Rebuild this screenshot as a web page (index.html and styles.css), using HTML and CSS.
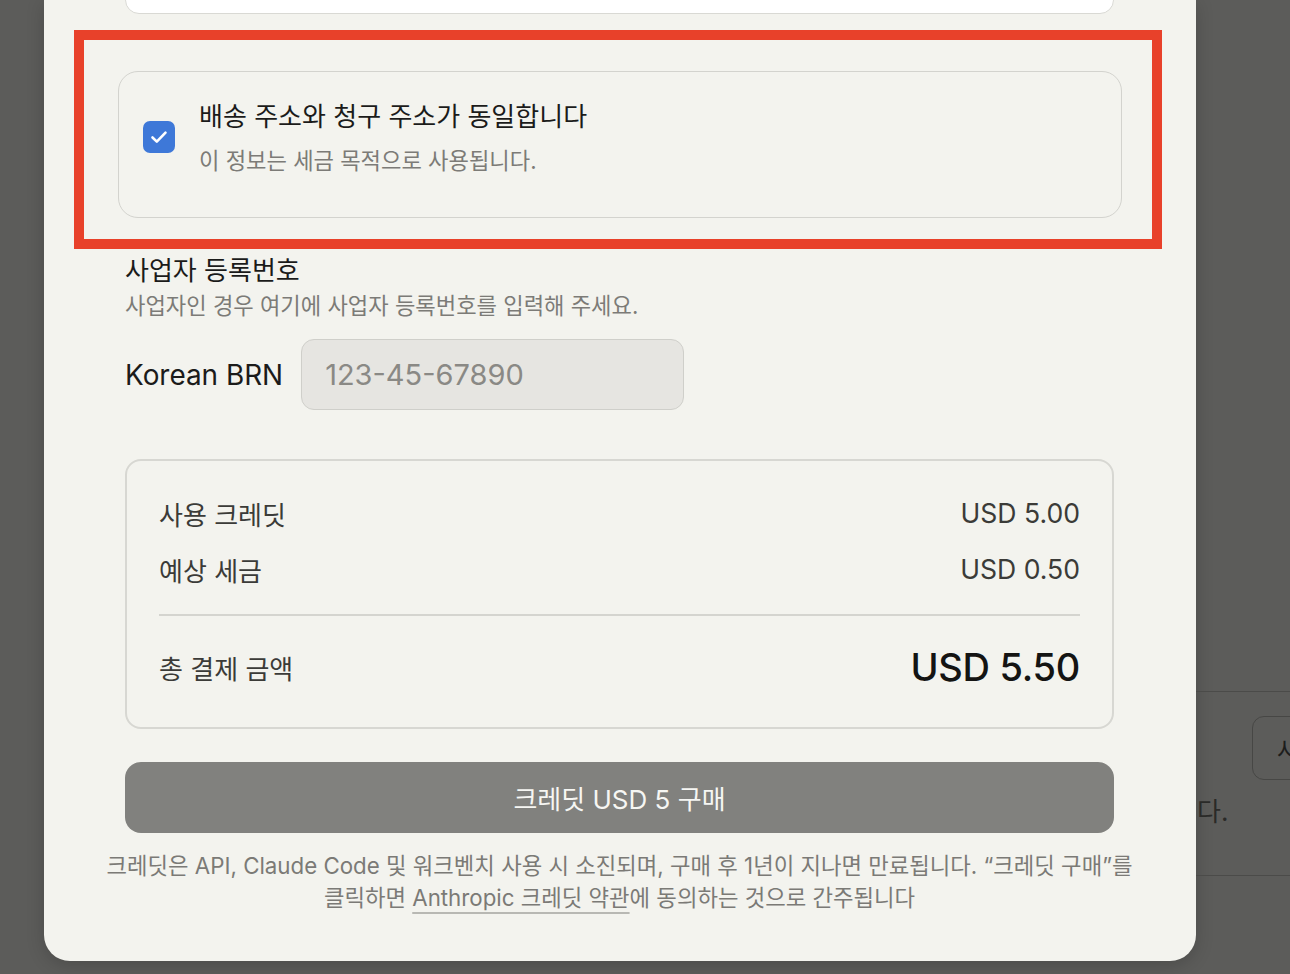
FILE: index.html
```html
<!DOCTYPE html>
<html lang="ko">
<head>
<meta charset="utf-8">
<title>크레딧 구매</title>
<link rel="stylesheet" href="styles.css">
</head>
<body>
<div class="page">
  <div class="modal">
    <div class="prev-input"></div>

    <div class="highlight">
      <label class="check-card">
        <span class="checkbox">
          <svg viewBox="0 0 32 32" width="32" height="32" aria-hidden="true">
            <path d="M9.5 16.5 L13.8 20.6 L22.5 11.6" fill="none" stroke="#ffffff" stroke-width="2.6" stroke-linecap="round" stroke-linejoin="round"/>
          </svg>
        </span>
        <span class="check-text">
          <span class="check-title">배송 주소와 청구 주소가 동일합니다</span>
          <span class="check-sub">이 정보는 세금 목적으로 사용됩니다.</span>
        </span>
      </label>
    </div>

    <div class="brn-section">
      <div class="section-title">사업자 등록번호</div>
      <div class="section-sub">사업자인 경우 여기에 사업자 등록번호를 입력해 주세요.</div>
      <div class="brn-row">
        <span class="brn-label">Korean BRN</span>
        <div class="brn-input">123-45-67890</div>
      </div>
    </div>

    <div class="summary">
      <div class="sum-row">
        <span class="sum-label">사용 크레딧</span>
        <span class="sum-value">USD 5.00</span>
      </div>
      <div class="sum-row second">
        <span class="sum-label">예상 세금</span>
        <span class="sum-value">USD 0.50</span>
      </div>
      <div class="sum-divider"></div>
      <div class="sum-row total">
        <span class="sum-label">총 결제 금액</span>
        <span class="sum-total">USD 5.50</span>
      </div>
    </div>

    <button class="buy-btn" type="button">크레딧 USD 5 구매</button>

    <p class="footnote">크레딧은 API, Claude Code 및 워크벤치 사용 시 소진되며, 구매 후 1년이 지나면 만료됩니다. “크레딧 구매”를<br>클릭하면 <span class="terms">Anthropic 크레딧 약관</span>에 동의하는 것으로 간주됩니다</p>
  </div>

  <div class="behind">
    <div class="behind-section">
      <div class="behind-btn">사용</div>
      <div class="behind-text">다.</div>
    </div>
  </div>
</div>
</body>
</html>
```

FILE: styles.css
```css
* {
  box-sizing: border-box;
}

html, body {
  margin: 0;
  padding: 0;
}

body {
  background: #5c5c5a;
  font-family: "Inter", "Noto Sans CJK KR", sans-serif;
  overflow: hidden;
  width: 1290px;
  height: 974px;
}

.page {
  display: flex;
  height: 974px;
  overflow: hidden;
}

.modal {
  flex: none;
  width: 1152px;
  margin-left: 44px;
  height: 961px;
  background: #f3f3ee;
  border-radius: 0 0 26px 26px;
  box-shadow: 0 4px 18px rgba(0, 0, 0, 0.18);
  display: flex;
  flex-direction: column;
  padding: 0 82px 0 81px;
}

.prev-input {
  flex: none;
  height: 56px;
  margin-top: -42px;
  background: #ffffff;
  border: 1.5px solid #d9d9d4;
  border-radius: 14px;
}

.highlight {
  margin: 16px -48px 0 -51px;
  border: 10px solid #e8412a;
  padding: 31px 30px 21px 34px;
}

.check-card {
  display: flex;
  align-items: flex-start;
  gap: 24px;
  height: 147px;
  border: 1.5px solid #d3d3ce;
  border-radius: 20px;
  padding: 27px 24px 0 24px;
}

.checkbox {
  flex: none;
  width: 32px;
  height: 32px;
  margin-top: 22px;
  background: #3e78d8;
  border-radius: 7px;
  display: flex;
}

.check-text {
  display: flex;
  flex-direction: column;
}

.check-title {
  font-size: 26px;
  line-height: 36px;
  color: #1b1b1a;
}

.check-sub {
  margin-top: 10px;
  font-size: 22.2px;
  line-height: 32px;
  color: #7c7b77;
}

.brn-section {
  display: flex;
  flex-direction: column;
}

.section-title {
  margin-top: 4px;
  font-size: 26px;
  line-height: 36px;
  color: #1b1b1a;
}

.section-sub {
  margin-top: 1px;
  font-size: 22.2px;
  line-height: 32px;
  color: #7c7b77;
}

.brn-row {
  margin-top: 17px;
  display: flex;
  align-items: center;
  gap: 18px;
}

.brn-label {
  font-size: 27.9px;
  color: #1b1b1a;
}

.brn-input {
  width: 383px;
  height: 71px;
  background: #e6e5e1;
  border: 1.5px solid #cfcfca;
  border-radius: 13px;
  padding-left: 23px;
  display: flex;
  align-items: center;
  font-size: 29px;
  color: #8a8985;
}

.summary {
  margin-top: 49px;
  border: 2px solid #d7d7d2;
  border-radius: 16px;
  padding: 34px 32px 34px 32px;
  display: flex;
  flex-direction: column;
}

.sum-row {
  display: flex;
  justify-content: space-between;
  align-items: center;
  height: 36px;
}

.sum-row.second {
  margin-top: 20px;
}

.sum-label {
  font-size: 26px;
  color: #3b3b38;
}

.sum-value {
  font-size: 26.6px;
  color: #3b3b38;
}

.sum-divider {
  margin-top: 27px;
  height: 2px;
  background: #d4d4cf;
}

.sum-row.total {
  margin-top: 25px;
  height: 52px;
}

.sum-total {
  font-size: 38px;
  font-weight: 500;
  color: #141413;
  letter-spacing: -0.3px;
}

.buy-btn {
  margin-top: 33px;
  height: 71px;
  border: none;
  border-radius: 16px;
  background: #81817e;
  color: #f6f6f3;
  font-family: inherit;
  font-size: 26px;
  padding: 0;
}

.footnote {
  margin: 17px -40px 0 -40px;
  text-align: center;
  font-size: 22.3px;
  line-height: 32px;
  color: #7b7a76;
}

.terms {
  text-decoration: underline;
  text-decoration-color: #b8b8b3;
  text-decoration-thickness: 1.5px;
  text-underline-offset: 6px;
}

.behind {
  flex: 1;
  min-width: 0;
  display: flex;
  flex-direction: column;
}

.behind-section {
  margin-top: 691px;
  height: 185px;
  border-top: 1.5px solid #4b4b49;
  border-bottom: 1.5px solid #4b4b49;
  display: flex;
  flex-direction: column;
  overflow: hidden;
}

.behind-btn {
  margin: 24px 0 0 56px;
  width: 120px;
  height: 64px;
  border: 1.5px solid #474745;
  border-radius: 12px;
  padding-left: 24px;
  display: flex;
  align-items: center;
  font-size: 24px;
  color: #1d1d1c;
  white-space: nowrap;
  flex: none;
}

.behind-text {
  margin-top: 14px;
  padding-left: 1px;
  font-size: 26px;
  line-height: 36px;
  color: #2a2a28;
}
```
